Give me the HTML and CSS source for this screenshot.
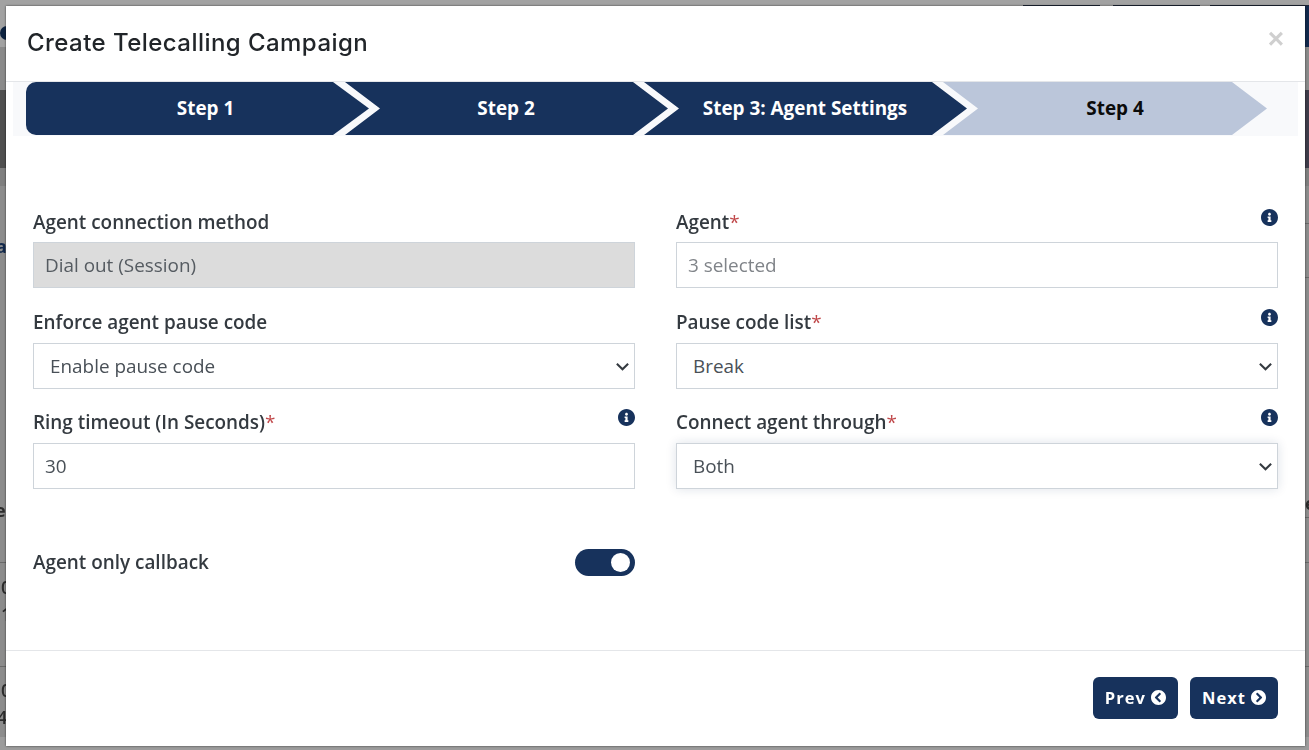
FILE: index.html
```html
<!DOCTYPE html>
<html lang="en">
<head>
<meta charset="utf-8">
<title>Create Telecalling Campaign</title>
<link rel="stylesheet" href="styles.css">
</head>
<body>
<div class="backdrop">
  <span class="bg-top"></span>
  <span class="bg-tab tab-a"></span>
  <span class="bg-tab tab-b"></span>
  <span class="bg-tab tab-c"></span>
  <span class="bg-navy"></span>
  <span class="bg-dot"></span>
  <span class="bg-head"></span>
  <span class="bg-band"></span>
  <span class="bg-band-r"></span>
  <span class="bg-sub"></span>
  <span class="bg-line line-a"></span>
  <span class="bg-line line-b"></span>
  <span class="bg-line line-c"></span>
  <span class="bg-line line-d"></span>
  <span class="bg-line line-e"></span>
  <span class="bg-foot"></span>
  <span class="bg-text txt-a">a</span>
  <span class="bg-text txt-b">e</span>
  <span class="bg-text txt-c">0</span>
  <span class="bg-text txt-d">1</span>
  <span class="bg-text txt-e">0</span>
  <span class="bg-text txt-f">4</span>
  <span class="bg-text txt-g">e</span>
</div>
<div class="modal">
  <header class="modal-header">
    <h1 class="modal-title">Create Telecalling Campaign</h1>
    <span class="close">×</span>
  </header>
  <div class="stepper-wrap">
    <div class="stepper">
      <div class="step step-first">Step 1</div>
      <div class="step step-mid">Step 2</div>
      <div class="step step-mid">Step 3: Agent Settings</div>
      <div class="step step-last">Step 4</div>
    </div>
  </div>
  <main class="modal-body">
    <div class="form-grid">
      <div class="field">
        <div class="label-row"><label>Agent connection method</label></div>
        <div class="control control-disabled">Dial out (Session)</div>
      </div>
      <div class="field">
        <div class="label-row"><label>Agent<em>*</em></label>
          <svg class="info" viewBox="8 8 496 496"><path d="M256 8C119 8 8 119 8 256s111 248 248 248 248-111 248-248S393 8 256 8zm0 110c23 0 42 19 42 42s-19 42-42 42-42-19-42-42 19-42 42-42zm56 254c0 7-5 12-12 12h-88c-7 0-12-5-12-12v-24c0-7 5-12 12-12h12v-64h-12c-7 0-12-5-12-12v-24c0-7 5-12 12-12h64c7 0 12 5 12 12v100h12c7 0 12 5 12 12v24z"/></svg>
        </div>
        <div class="control control-placeholder">3 selected</div>
      </div>
      <div class="field">
        <div class="label-row"><label>Enforce agent pause code</label></div>
        <div class="control control-select"><span>Enable pause code</span>
          <svg class="caret" viewBox="0 0 16 16"><path d="M2 5l6 6 6-6"/></svg></div>
      </div>
      <div class="field">
        <div class="label-row"><label>Pause code list<em>*</em></label>
          <svg class="info" viewBox="8 8 496 496"><path d="M256 8C119 8 8 119 8 256s111 248 248 248 248-111 248-248S393 8 256 8zm0 110c23 0 42 19 42 42s-19 42-42 42-42-19-42-42 19-42 42-42zm56 254c0 7-5 12-12 12h-88c-7 0-12-5-12-12v-24c0-7 5-12 12-12h12v-64h-12c-7 0-12-5-12-12v-24c0-7 5-12 12-12h64c7 0 12 5 12 12v100h12c7 0 12 5 12 12v24z"/></svg>
        </div>
        <div class="control control-select"><span>Break</span>
          <svg class="caret" viewBox="0 0 16 16"><path d="M2 5l6 6 6-6"/></svg></div>
      </div>
      <div class="field">
        <div class="label-row"><label>Ring timeout (In Seconds)<em>*</em></label>
          <svg class="info" viewBox="8 8 496 496"><path d="M256 8C119 8 8 119 8 256s111 248 248 248 248-111 248-248S393 8 256 8zm0 110c23 0 42 19 42 42s-19 42-42 42-42-19-42-42 19-42 42-42zm56 254c0 7-5 12-12 12h-88c-7 0-12-5-12-12v-24c0-7 5-12 12-12h12v-64h-12c-7 0-12-5-12-12v-24c0-7 5-12 12-12h64c7 0 12 5 12 12v100h12c7 0 12 5 12 12v24z"/></svg>
        </div>
        <div class="control">30</div>
      </div>
      <div class="field">
        <div class="label-row"><label>Connect agent through<em>*</em></label>
          <svg class="info" viewBox="8 8 496 496"><path d="M256 8C119 8 8 119 8 256s111 248 248 248 248-111 248-248S393 8 256 8zm0 110c23 0 42 19 42 42s-19 42-42 42-42-19-42-42 19-42 42-42zm56 254c0 7-5 12-12 12h-88c-7 0-12-5-12-12v-24c0-7 5-12 12-12h12v-64h-12c-7 0-12-5-12-12v-24c0-7 5-12 12-12h64c7 0 12 5 12 12v100h12c7 0 12 5 12 12v24z"/></svg>
        </div>
        <div class="control control-select control-focus"><span>Both</span>
          <svg class="caret" viewBox="0 0 16 16"><path d="M2 5l6 6 6-6"/></svg></div>
      </div>
      <div class="toggle-row">
        <span class="toggle-label">Agent only callback</span>
        <span class="toggle"><span class="knob"></span></span>
      </div>
    </div>
  </main>
  <footer class="modal-footer">
    <button class="btn">Prev
      <svg class="btn-icon" viewBox="8 8 496 496"><path d="M256 504C119 504 8 393 8 256S119 8 256 8s248 111 248 248-111 248-248 248zM142 273l135 135c9 9 25 9 34 0l17-17c9-9 9-25 0-34L227 256l101-101c9-9 9-25 0-34l-17-17c-9-9-25-9-34 0L142 239c-9 9-9 25 0 34z"/></svg>
    </button>
    <button class="btn">Next
      <svg class="btn-icon" viewBox="8 8 496 496"><path d="M256 8c137 0 248 111 248 248S393 504 256 504 8 393 8 256 119 8 256 8zm114 231L235 104c-9-9-25-9-34 0l-17 17c-9 9-9 25 0 34l101 101-101 101c-9 9-9 25 0 34l17 17c9 9 25 9 34 0l135-135c9-9 9-25 0-34z"/></svg>
    </button>
  </footer>
</div>
</body>
</html>
```

FILE: styles.css
```css
* { box-sizing: border-box; }
html, body { margin: 0; height: 100%; overflow: hidden; }
body {
  background: #8c8c8c;
  font-family: "Open Sans", "Noto Sans", sans-serif;
  color: #343a40;
  padding: 6px 4px 4px 6px;
}
.backdrop { position: fixed; inset: 0; overflow: hidden; }
.backdrop span { position: absolute; }
.bg-top { left: 0; top: 0; width: 100%; height: 70px; background: #a2a2a2; }
.bg-tab { top: 5px; height: 2px; background: #1c2434; }
.tab-a { left: 1023px; width: 77px; }
.tab-b { left: 1113px; width: 87px; }
.tab-c { left: 1210px; width: 99px; }
.bg-navy { left: 1305px; top: 6px; width: 4px; height: 41px; background: #12294c; }
.bg-dot { left: 0; top: 26px; width: 14px; height: 14px; border-radius: 50%; background: #0d2240; }
.bg-head { left: 0; top: 47px; width: 100%; height: 43px; background: #8a8a8a; }
.bg-band { left: 0; top: 90px; width: 100%; height: 78px; background: #4f4f4f; }
.bg-band-r { left: 1300px; top: 90px; width: 9px; height: 78px; background: #3f3c4a; }
.bg-sub { left: 0; top: 168px; width: 100%; height: 18px; background: #7f7f7f; }
.bg-line { left: 0; width: 100%; height: 1px; background: #6a6a6a; }
.line-a { top: 223px; left: 1300px; }
.line-b { top: 277px; left: 1300px; }
.line-c { top: 517px; left: 1300px; }
.line-d { top: 562px; }
.line-e { top: 666px; }
.bg-foot { left: 0; top: 737px; width: 100%; height: 13px; background: #9c9c9c; }
.bg-text { font-size: 18px; font-weight: 600; color: #2c2c2c; line-height: 20px; }
.txt-a { left: -4px; top: 236px; font-weight: 700; color: #12294c; }
.txt-b { left: -5px; top: 500px; font-weight: 700; }
.txt-c { left: 1px; top: 577px; }
.txt-d { left: 1px; top: 604px; }
.txt-e { left: 1px; top: 680px; }
.txt-f { left: -3px; top: 707px; }
.txt-g { left: 1305px; top: 493px; font-weight: 700; }

.modal {
  position: relative;
  width: 1299px;
  height: 740px;
  background: #fff;
  display: flex;
  flex-direction: column;
  box-shadow: 0 0 2px rgba(0,0,0,.65);
}
.modal-header {
  height: 76px;
  flex: none;
  display: flex;
  align-items: center;
  justify-content: space-between;
  padding: 0 21px 2px 21px;
  border-bottom: 1px solid #e4e6e9;
}
.modal-title {
  margin: 0;
  font-family: Inter, "Open Sans", sans-serif;
  font-size: 24px;
  font-weight: 500;
  letter-spacing: .45px;
  color: #212529;
}
.close {
  font-family: "Liberation Sans", sans-serif;
  font-size: 28px;
  font-weight: 700;
  line-height: 1;
  color: #cfcfcf;
  margin-bottom: 8px;
}
.stepper-wrap { flex: none; padding: 0 7px; }
.stepper {
  display: flex;
  height: 54px;
  padding-left: 13px;
  background: #f8f9fb;
}
.step {
  flex: none;
  display: flex;
  align-items: center;
  justify-content: center;
  height: 53px;
  padding-bottom: 2px;
  font-size: 18.9px;
  font-weight: 700;
  color: #fff;
  background: #17325c;
}
.step-first {
  width: 343px;
  padding-left: 16px;
  border-radius: 10px 0 0 10px;
  clip-path: polygon(0 0, 307px 0, 100% 50%, 307px 100%, 0 100%);
}
.step-mid {
  width: 323px;
  margin-left: -24px;
  padding-right: 1px;
  clip-path: polygon(0 0, 288px 0, 100% 50%, 288px 100%, 0 100%, 35px 50%);
}
.step-last {
  width: 324px;
  margin-left: -24px;
  padding-left: 20px;
  color: #0b0b0b;
  background: #bbc6da;
  clip-path: polygon(0 0, 289px 0, 100% 50%, 289px 100%, 0 100%, 35px 50%);
}
.modal-body { flex: 1; padding: 70px 27px 0; }
.form-grid {
  display: grid;
  grid-template-columns: 602px 602px;
  column-gap: 41px;
  row-gap: 17px;
}
.field { display: flex; flex-direction: column; }
.field:nth-child(-n+2) { margin-bottom: 1px; }
.label-row {
  height: 36px;
  display: flex;
  justify-content: space-between;
  align-items: flex-start;
}
.field:nth-child(n+3) .label-row { height: 37px; }
.label-row label {
  font-size: 18.9px;
  font-weight: 600;
  line-height: 24px;
  padding-top: 4px;
  color: #343a40;
}
.label-row em { font-style: normal; font-weight: 400; color: #c0484a; }
.info { width: 17px; height: 17px; fill: #17325c; margin-top: 3px; }
.control {
  height: 46px;
  display: flex;
  align-items: center;
  justify-content: space-between;
  padding: 0 11px;
  border: 1px solid #ced4da;
  background: #fff;
  font-size: 18.9px;
  color: #495057;
}
.control-disabled { background: #dcdcdc; color: #555b61; }
.control-placeholder { color: #808489; }
.control-select { padding: 0 4px 0 16px; }
.control-focus { box-shadow: 0 0 10px rgba(23,50,92,.14); }
.caret { width: 15px; height: 15px; fill: none; stroke: #343a40; stroke-width: 2.2; }
.toggle-row {
  grid-column: 1;
  display: flex;
  align-items: center;
  justify-content: space-between;
  margin-top: 41px;
  height: 30px;
}
.toggle-label { font-size: 18.9px; font-weight: 600; color: #343a40; }
.toggle {
  width: 60px;
  height: 27px;
  border-radius: 14px;
  background: #17325c;
  display: flex;
  align-items: center;
  justify-content: flex-end;
  padding-right: 5px;
}
.knob { width: 19px; height: 19px; border-radius: 50%; background: #fff; }
.modal-footer {
  flex: none;
  height: 96px;
  border-top: 1px solid #e4e6e9;
  display: flex;
  justify-content: flex-end;
  align-items: flex-start;
  gap: 12px;
  padding: 26px 27px 0;
}
.btn {
  height: 42px;
  display: flex;
  align-items: center;
  gap: 5px;
  padding: 0 12px 1px;
  border: 0;
  border-radius: 6px;
  background: #17325c;
  color: #fff;
  font-family: "Open Sans", sans-serif;
  font-size: 16.5px;
  font-weight: 700;
  letter-spacing: 1.05px;
}
.btn-icon { width: 15px; height: 15px; fill: #fff; }
```
